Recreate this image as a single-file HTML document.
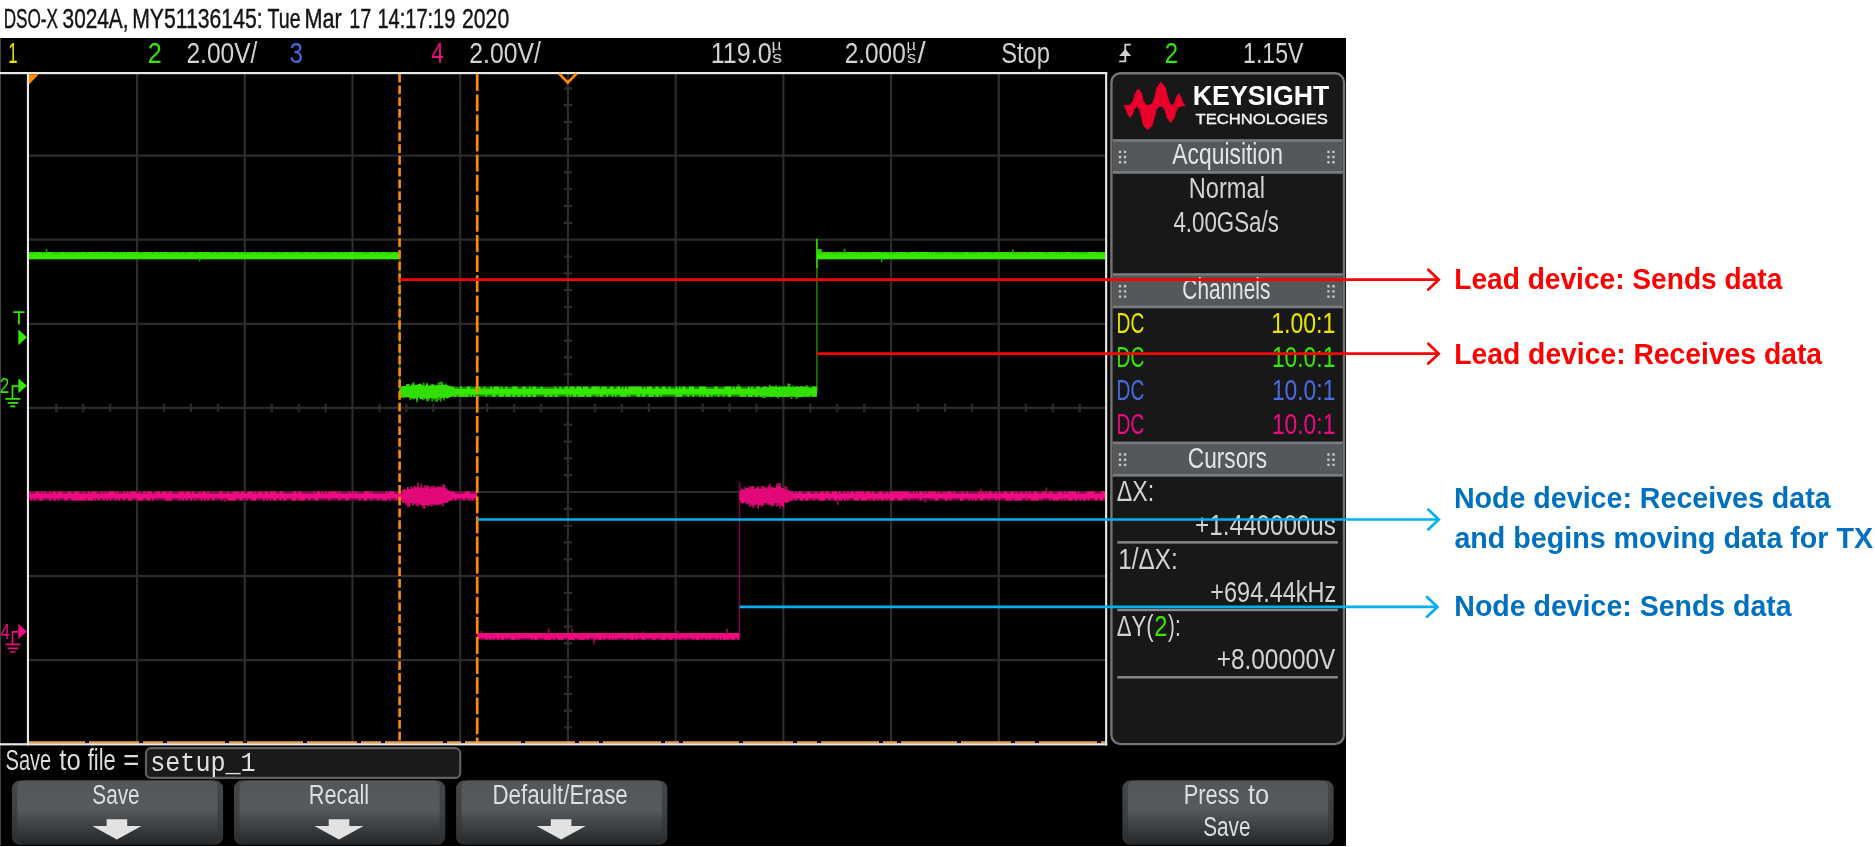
<!DOCTYPE html>
<html lang="en"><head><meta charset="utf-8"><title>Oscilloscope capture</title>
<style>html,body{margin:0;padding:0;background:#fff;overflow:hidden}svg{display:block;will-change:transform}text{white-space:pre}</style></head>
<body>
<svg width="1875" height="847" viewBox="0 0 1875 847">
<rect x="0" y="38" width="1346" height="808" fill="#000"/>
<rect x="0" y="38" width="1" height="808" fill="#444"/>
<text transform="translate(3.63 27.80) scale(0.6086 1)" font-family='"Liberation Sans", sans-serif' font-size="28.20" font-weight="400" fill="#141414" stroke="#141414" stroke-width="0.45">DSO-X</text>
<text transform="translate(62.57 27.80) scale(0.7384 1)" font-family='"Liberation Sans", sans-serif' font-size="28.20" font-weight="400" fill="#141414" stroke="#141414" stroke-width="0.45">3024A,</text>
<text transform="translate(132.20 27.80) scale(0.7520 1)" font-family='"Liberation Sans", sans-serif' font-size="28.20" font-weight="400" fill="#141414" stroke="#141414" stroke-width="0.45">MY51136145:</text>
<text transform="translate(267.61 27.80) scale(0.6940 1)" font-family='"Liberation Sans", sans-serif' font-size="28.20" font-weight="400" fill="#141414" stroke="#141414" stroke-width="0.45">Tue</text>
<text transform="translate(304.47 27.80) scale(0.7682 1)" font-family='"Liberation Sans", sans-serif' font-size="28.20" font-weight="400" fill="#141414" stroke="#141414" stroke-width="0.45">Mar</text>
<text transform="translate(349.32 27.80) scale(0.6985 1)" font-family='"Liberation Sans", sans-serif' font-size="28.20" font-weight="400" fill="#141414" stroke="#141414" stroke-width="0.45">17</text>
<text transform="translate(377.40 27.80) scale(0.7112 1)" font-family='"Liberation Sans", sans-serif' font-size="28.20" font-weight="400" fill="#141414" stroke="#141414" stroke-width="0.45">14:17:19</text>
<text transform="translate(462.04 27.80) scale(0.7524 1)" font-family='"Liberation Sans", sans-serif' font-size="28.20" font-weight="400" fill="#141414" stroke="#141414" stroke-width="0.45">2020</text>
<text transform="translate(8.14 62.70) scale(0.5773 1)" font-family='"Liberation Sans", sans-serif' font-size="29.07" font-weight="400" fill="#e6e600">1</text>
<text transform="translate(147.74 62.70) scale(0.8695 1)" font-family='"Liberation Sans", sans-serif' font-size="29.07" font-weight="400" fill="#36e800">2</text>
<text transform="translate(186.47 62.70) scale(0.8440 1)" font-family='"Liberation Sans", sans-serif' font-size="29.07" font-weight="400" fill="#d2d2d2">2.00V/</text>
<text transform="translate(289.76 62.70) scale(0.8111 1)" font-family='"Liberation Sans", sans-serif' font-size="29.07" font-weight="400" fill="#4a6be0">3</text>
<text transform="translate(431.15 62.70) scale(0.7766 1)" font-family='"Liberation Sans", sans-serif' font-size="29.07" font-weight="400" fill="#ee0a80">4</text>
<text transform="translate(469.36 62.70) scale(0.8500 1)" font-family='"Liberation Sans", sans-serif' font-size="29.07" font-weight="400" fill="#d2d2d2">2.00V/</text>
<text transform="translate(710.72 62.70) scale(0.8633 1)" font-family='"Liberation Sans", sans-serif' font-size="29.07" font-weight="400" fill="#d2d2d2">119.0</text>
<text transform="translate(771.57 50.40) scale(1.2518 1)" font-family='"Liberation Sans", sans-serif' font-size="14.00" font-weight="400" fill="#d2d2d2">µ</text>
<text transform="translate(772.21 62.70) scale(1.1494 1)" font-family='"Liberation Sans", sans-serif' font-size="17.00" font-weight="400" fill="#d2d2d2">s</text>
<text transform="translate(844.68 62.70) scale(0.8390 1)" font-family='"Liberation Sans", sans-serif' font-size="29.07" font-weight="400" fill="#d2d2d2">2.000</text>
<text transform="translate(906.45 50.40) scale(1.1782 1)" font-family='"Liberation Sans", sans-serif' font-size="14.00" font-weight="400" fill="#d2d2d2">µ</text>
<text transform="translate(907.05 62.70) scale(1.0818 1)" font-family='"Liberation Sans", sans-serif' font-size="17.00" font-weight="400" fill="#d2d2d2">s</text>
<text transform="translate(917.50 62.70) scale(1.0074 1)" font-family='"Liberation Sans", sans-serif' font-size="29.07" font-weight="400" fill="#d2d2d2">/</text>
<text transform="translate(1001.13 62.70) scale(0.8172 1)" font-family='"Liberation Sans", sans-serif' font-size="29.07" font-weight="400" fill="#d2d2d2">Stop</text>
<text transform="translate(1164.70 62.70) scale(0.8241 1)" font-family='"Liberation Sans", sans-serif' font-size="29.07" font-weight="400" fill="#36e800">2</text>
<text transform="translate(1243.07 62.70) scale(0.7941 1)" font-family='"Liberation Sans", sans-serif' font-size="29.07" font-weight="400" fill="#d2d2d2">1.15V</text>
<g fill="none" stroke="#d2d2d2" stroke-width="1.8"><path d="M1119.2 61.4H1125.3V44.6H1130.9"/></g>
<path d="M1125.3 48.9L1131.2 56H1119.2Z" fill="#d2d2d2"/>
<path d="M137.10 74V743M244.81 74V743M352.52 74V743M460.23 74V743M567.94 74V743M675.65 74V743M783.36 74V743M891.07 74V743M998.78 74V743M29 155.60H1105M29 239.70H1105M29 323.80H1105M29 407.90H1105M29 492.00H1105M29 576.10H1105M29 660.20H1105M56.33 403.70V412.10M83.26 403.70V412.10M110.19 403.70V412.10M137.12 403.70V412.10M164.05 403.70V412.10M190.98 403.70V412.10M217.91 403.70V412.10M244.84 403.70V412.10M271.77 403.70V412.10M298.70 403.70V412.10M325.63 403.70V412.10M352.56 403.70V412.10M379.49 403.70V412.10M406.42 403.70V412.10M433.35 403.70V412.10M460.28 403.70V412.10M487.21 403.70V412.10M514.14 403.70V412.10M541.07 403.70V412.10M568.00 403.70V412.10M594.93 403.70V412.10M621.86 403.70V412.10M648.79 403.70V412.10M675.72 403.70V412.10M702.65 403.70V412.10M729.58 403.70V412.10M756.51 403.70V412.10M783.44 403.70V412.10M810.37 403.70V412.10M837.30 403.70V412.10M864.23 403.70V412.10M891.16 403.70V412.10M918.09 403.70V412.10M945.02 403.70V412.10M971.95 403.70V412.10M998.88 403.70V412.10M1025.81 403.70V412.10M1052.74 403.70V412.10M1079.67 403.70V412.10M563.74 88.32H572.14M563.74 105.14H572.14M563.74 121.96H572.14M563.74 138.78H572.14M563.74 155.60H572.14M563.74 172.42H572.14M563.74 189.24H572.14M563.74 206.06H572.14M563.74 222.88H572.14M563.74 239.70H572.14M563.74 256.52H572.14M563.74 273.34H572.14M563.74 290.16H572.14M563.74 306.98H572.14M563.74 323.80H572.14M563.74 340.62H572.14M563.74 357.44H572.14M563.74 374.26H572.14M563.74 391.08H572.14M563.74 407.90H572.14M563.74 424.72H572.14M563.74 441.54H572.14M563.74 458.36H572.14M563.74 475.18H572.14M563.74 492.00H572.14M563.74 508.82H572.14M563.74 525.64H572.14M563.74 542.46H572.14M563.74 559.28H572.14M563.74 576.10H572.14M563.74 592.92H572.14M563.74 609.74H572.14M563.74 626.56H572.14M563.74 643.38H572.14M563.74 660.20H572.14M563.74 677.02H572.14M563.74 693.84H572.14M563.74 710.66H572.14M563.74 727.48H572.14" stroke="#2c2c2c" stroke-width="2.2" fill="none"/>
<path d="M399.8 256V392" stroke="#176400" stroke-width="1.6"/>
<path d="M816.9 266V392" stroke="#1d7c00" stroke-width="1.6"/>
<path d="M816.9 238.8V268" stroke="#2cc800" stroke-width="1.9"/>
<rect x="29.0" y="252.00" width="370.6" height="7.20" fill="#2bc400"/><rect x="29.0" y="253.70" width="370.6" height="5.50" fill="#36e800"/><path d="M34.0 252.00h1.68v1.80h-1.68zM37.4 252.00h1.68v1.80h-1.68zM39.1 252.00h1.68v1.80h-1.68zM45.8 252.00h1.68v1.80h-1.68zM47.5 252.00h1.68v1.80h-1.68zM49.2 252.00h1.68v1.80h-1.68zM50.9 252.00h1.68v1.80h-1.68zM61.0 252.00h1.68v1.80h-1.68zM62.6 252.00h1.68v1.80h-1.68zM69.4 252.00h1.68v1.80h-1.68zM74.4 252.00h1.68v1.80h-1.68zM77.8 252.00h1.68v1.80h-1.68zM81.2 252.00h1.68v1.80h-1.68zM82.8 252.00h1.68v1.80h-1.68zM87.9 252.00h1.68v1.80h-1.68zM89.6 252.00h1.68v1.80h-1.68zM91.3 252.00h1.68v1.80h-1.68zM92.9 252.00h1.68v1.80h-1.68zM96.3 252.00h1.68v1.80h-1.68zM98.0 252.00h1.68v1.80h-1.68zM101.3 252.00h1.68v1.80h-1.68zM103.0 252.00h1.68v1.80h-1.68zM106.4 252.00h1.68v1.80h-1.68zM108.1 252.00h1.68v1.80h-1.68zM109.8 252.00h1.68v1.80h-1.68zM111.4 252.00h1.68v1.80h-1.68zM116.5 252.00h1.68v1.80h-1.68zM119.9 252.00h1.68v1.80h-1.68zM123.2 252.00h1.68v1.80h-1.68zM126.6 252.00h1.68v1.80h-1.68zM128.3 252.00h1.68v1.80h-1.68zM130.0 252.00h1.68v1.80h-1.68zM131.6 252.00h1.68v1.80h-1.68zM135.0 252.00h1.68v1.80h-1.68zM136.7 252.00h1.68v1.80h-1.68zM143.4 252.00h1.68v1.80h-1.68zM145.1 252.00h1.68v1.80h-1.68zM146.8 252.00h1.68v1.80h-1.68zM150.1 252.00h1.68v1.80h-1.68zM155.2 252.00h1.68v1.80h-1.68zM156.9 252.00h1.68v1.80h-1.68zM160.2 252.00h1.68v1.80h-1.68zM163.6 252.00h1.68v1.80h-1.68zM165.3 252.00h1.68v1.80h-1.68zM172.0 252.00h1.68v1.80h-1.68zM175.4 252.00h1.68v1.80h-1.68zM182.1 252.00h1.68v1.80h-1.68zM188.8 252.00h1.68v1.80h-1.68zM190.5 252.00h1.68v1.80h-1.68zM192.2 252.00h1.68v1.80h-1.68zM198.9 252.00h1.68v1.80h-1.68zM200.6 252.00h1.68v1.80h-1.68zM204.0 252.00h1.68v1.80h-1.68zM205.7 252.00h1.68v1.80h-1.68zM207.3 252.00h1.68v1.80h-1.68zM214.1 252.00h1.68v1.80h-1.68zM219.1 252.00h1.68v1.80h-1.68zM222.5 252.00h1.68v1.80h-1.68zM225.9 252.00h1.68v1.80h-1.68zM229.2 252.00h1.68v1.80h-1.68zM234.3 252.00h1.68v1.80h-1.68zM235.9 252.00h1.68v1.80h-1.68zM241.0 252.00h1.68v1.80h-1.68zM251.1 252.00h1.68v1.80h-1.68zM254.5 252.00h1.68v1.80h-1.68zM259.5 252.00h1.68v1.80h-1.68zM264.6 252.00h1.68v1.80h-1.68zM267.9 252.00h1.68v1.80h-1.68zM278.0 252.00h1.68v1.80h-1.68zM283.1 252.00h1.68v1.80h-1.68zM286.4 252.00h1.68v1.80h-1.68zM294.8 252.00h1.68v1.80h-1.68zM296.5 252.00h1.68v1.80h-1.68zM304.9 252.00h1.68v1.80h-1.68zM306.6 252.00h1.68v1.80h-1.68zM311.7 252.00h1.68v1.80h-1.68zM315.0 252.00h1.68v1.80h-1.68zM325.1 252.00h1.68v1.80h-1.68zM333.5 252.00h1.68v1.80h-1.68zM335.2 252.00h1.68v1.80h-1.68zM340.3 252.00h1.68v1.80h-1.68zM345.3 252.00h1.68v1.80h-1.68zM348.7 252.00h1.68v1.80h-1.68zM350.4 252.00h1.68v1.80h-1.68zM352.0 252.00h1.68v1.80h-1.68zM353.7 252.00h1.68v1.80h-1.68zM357.1 252.00h1.68v1.80h-1.68zM360.5 252.00h1.68v1.80h-1.68zM370.5 252.00h1.68v1.80h-1.68zM372.2 252.00h1.68v1.80h-1.68zM375.6 252.00h1.68v1.80h-1.68zM377.3 252.00h1.68v1.80h-1.68zM382.3 252.00h1.68v1.80h-1.68zM384.0 252.00h1.68v1.80h-1.68zM392.4 252.00h1.68v1.80h-1.68zM394.1 252.00h1.68v1.80h-1.68zM399.2 252.00h0.45v1.80h-0.45z" fill="#36e800"/><path d="M45.8 248.91h1.5v4.1h-1.5zM198.9 258.20h1.5v3.4h-1.5z" fill="#23a800"/>
<rect x="399.6" y="386.60" width="417.3" height="10.10" fill="#1d8c00"/><rect x="399.6" y="388.90" width="417.3" height="5.50" fill="#36e800"/><path d="M401.3 386.60h1.68v2.40h-1.68zM401.3 394.30h1.68v2.40h-1.68zM403.0 386.60h1.68v2.40h-1.68zM404.6 386.60h1.68v2.40h-1.68zM406.3 394.30h1.68v2.40h-1.68zM408.0 394.30h1.68v2.40h-1.68zM409.7 394.30h1.68v2.40h-1.68zM411.4 386.60h1.68v2.40h-1.68zM418.1 394.30h1.68v2.40h-1.68zM421.5 386.60h1.68v2.40h-1.68zM424.8 386.60h1.68v2.40h-1.68zM426.5 386.60h1.68v2.40h-1.68zM426.5 394.30h1.68v2.40h-1.68zM428.2 386.60h1.68v2.40h-1.68zM429.9 386.60h1.68v2.40h-1.68zM431.6 386.60h1.68v2.40h-1.68zM433.3 386.60h1.68v2.40h-1.68zM433.3 394.30h1.68v2.40h-1.68zM436.6 394.30h1.68v2.40h-1.68zM438.3 394.30h1.68v2.40h-1.68zM440.0 386.60h1.68v2.40h-1.68zM440.0 394.30h1.68v2.40h-1.68zM441.7 386.60h1.68v2.40h-1.68zM441.7 394.30h1.68v2.40h-1.68zM446.7 394.30h1.68v2.40h-1.68zM448.4 394.30h1.68v2.40h-1.68zM450.1 386.60h1.68v2.40h-1.68zM450.1 394.30h1.68v2.40h-1.68zM451.8 386.60h1.68v2.40h-1.68zM453.4 394.30h1.68v2.40h-1.68zM455.1 394.30h1.68v2.40h-1.68zM458.5 394.30h1.68v2.40h-1.68zM460.2 386.60h1.68v2.40h-1.68zM460.2 394.30h1.68v2.40h-1.68zM461.9 394.30h1.68v2.40h-1.68zM463.5 394.30h1.68v2.40h-1.68zM465.2 394.30h1.68v2.40h-1.68zM466.9 386.60h1.68v2.40h-1.68zM466.9 394.30h1.68v2.40h-1.68zM468.6 386.60h1.68v2.40h-1.68zM470.3 394.30h1.68v2.40h-1.68zM473.6 394.30h1.68v2.40h-1.68zM475.3 386.60h1.68v2.40h-1.68zM477.0 386.60h1.68v2.40h-1.68zM478.7 386.60h1.68v2.40h-1.68zM483.7 386.60h1.68v2.40h-1.68zM485.4 394.30h1.68v2.40h-1.68zM490.5 386.60h1.68v2.40h-1.68zM492.1 394.30h1.68v2.40h-1.68zM493.8 386.60h1.68v2.40h-1.68zM493.8 394.30h1.68v2.40h-1.68zM495.5 386.60h1.68v2.40h-1.68zM497.2 386.60h1.68v2.40h-1.68zM498.9 394.30h1.68v2.40h-1.68zM500.6 386.60h1.68v2.40h-1.68zM500.6 394.30h1.68v2.40h-1.68zM502.2 394.30h1.68v2.40h-1.68zM505.6 386.60h1.68v2.40h-1.68zM505.6 394.30h1.68v2.40h-1.68zM507.3 394.30h1.68v2.40h-1.68zM509.0 394.30h1.68v2.40h-1.68zM512.3 386.60h1.68v2.40h-1.68zM512.3 394.30h1.68v2.40h-1.68zM514.0 386.60h1.68v2.40h-1.68zM514.0 394.30h1.68v2.40h-1.68zM515.7 386.60h1.68v2.40h-1.68zM517.4 394.30h1.68v2.40h-1.68zM519.1 394.30h1.68v2.40h-1.68zM522.4 386.60h1.68v2.40h-1.68zM522.4 394.30h1.68v2.40h-1.68zM524.1 386.60h1.68v2.40h-1.68zM524.1 394.30h1.68v2.40h-1.68zM527.5 394.30h1.68v2.40h-1.68zM529.2 386.60h1.68v2.40h-1.68zM529.2 394.30h1.68v2.40h-1.68zM532.5 386.60h1.68v2.40h-1.68zM532.5 394.30h1.68v2.40h-1.68zM534.2 386.60h1.68v2.40h-1.68zM534.2 394.30h1.68v2.40h-1.68zM540.9 386.60h1.68v2.40h-1.68zM544.3 394.30h1.68v2.40h-1.68zM546.0 394.30h1.68v2.40h-1.68zM549.3 394.30h1.68v2.40h-1.68zM551.0 394.30h1.68v2.40h-1.68zM554.4 386.60h1.68v2.40h-1.68zM554.4 394.30h1.68v2.40h-1.68zM556.1 394.30h1.68v2.40h-1.68zM559.4 386.60h1.68v2.40h-1.68zM564.5 386.60h1.68v2.40h-1.68zM566.2 386.60h1.68v2.40h-1.68zM566.2 394.30h1.68v2.40h-1.68zM569.5 386.60h1.68v2.40h-1.68zM569.5 394.30h1.68v2.40h-1.68zM571.2 386.60h1.68v2.40h-1.68zM572.9 386.60h1.68v2.40h-1.68zM572.9 394.30h1.68v2.40h-1.68zM574.6 394.30h1.68v2.40h-1.68zM576.3 386.60h1.68v2.40h-1.68zM577.9 386.60h1.68v2.40h-1.68zM577.9 394.30h1.68v2.40h-1.68zM579.6 386.60h1.68v2.40h-1.68zM579.6 394.30h1.68v2.40h-1.68zM581.3 394.30h1.68v2.40h-1.68zM583.0 386.60h1.68v2.40h-1.68zM583.0 394.30h1.68v2.40h-1.68zM584.7 386.60h1.68v2.40h-1.68zM586.4 386.60h1.68v2.40h-1.68zM586.4 394.30h1.68v2.40h-1.68zM588.0 394.30h1.68v2.40h-1.68zM589.7 394.30h1.68v2.40h-1.68zM591.4 386.60h1.68v2.40h-1.68zM593.1 386.60h1.68v2.40h-1.68zM594.8 386.60h1.68v2.40h-1.68zM596.5 386.60h1.68v2.40h-1.68zM596.5 394.30h1.68v2.40h-1.68zM598.1 386.60h1.68v2.40h-1.68zM599.8 394.30h1.68v2.40h-1.68zM601.5 386.60h1.68v2.40h-1.68zM601.5 394.30h1.68v2.40h-1.68zM603.2 386.60h1.68v2.40h-1.68zM604.9 386.60h1.68v2.40h-1.68zM606.5 394.30h1.68v2.40h-1.68zM609.9 386.60h1.68v2.40h-1.68zM611.6 386.60h1.68v2.40h-1.68zM611.6 394.30h1.68v2.40h-1.68zM615.0 394.30h1.68v2.40h-1.68zM616.6 386.60h1.68v2.40h-1.68zM618.3 386.60h1.68v2.40h-1.68zM620.0 394.30h1.68v2.40h-1.68zM621.7 386.60h1.68v2.40h-1.68zM621.7 394.30h1.68v2.40h-1.68zM623.4 394.30h1.68v2.40h-1.68zM625.1 386.60h1.68v2.40h-1.68zM625.1 394.30h1.68v2.40h-1.68zM628.4 386.60h1.68v2.40h-1.68zM628.4 394.30h1.68v2.40h-1.68zM630.1 386.60h1.68v2.40h-1.68zM631.8 386.60h1.68v2.40h-1.68zM633.5 386.60h1.68v2.40h-1.68zM635.2 386.60h1.68v2.40h-1.68zM636.8 386.60h1.68v2.40h-1.68zM636.8 394.30h1.68v2.40h-1.68zM638.5 386.60h1.68v2.40h-1.68zM638.5 394.30h1.68v2.40h-1.68zM640.2 386.60h1.68v2.40h-1.68zM641.9 394.30h1.68v2.40h-1.68zM643.6 386.60h1.68v2.40h-1.68zM643.6 394.30h1.68v2.40h-1.68zM646.9 386.60h1.68v2.40h-1.68zM648.6 386.60h1.68v2.40h-1.68zM648.6 394.30h1.68v2.40h-1.68zM650.3 386.60h1.68v2.40h-1.68zM650.3 394.30h1.68v2.40h-1.68zM652.0 394.30h1.68v2.40h-1.68zM655.3 386.60h1.68v2.40h-1.68zM655.3 394.30h1.68v2.40h-1.68zM657.0 386.60h1.68v2.40h-1.68zM657.0 394.30h1.68v2.40h-1.68zM660.4 394.30h1.68v2.40h-1.68zM662.1 386.60h1.68v2.40h-1.68zM663.8 386.60h1.68v2.40h-1.68zM668.8 386.60h1.68v2.40h-1.68zM675.5 386.60h1.68v2.40h-1.68zM675.5 394.30h1.68v2.40h-1.68zM677.2 394.30h1.68v2.40h-1.68zM678.9 386.60h1.68v2.40h-1.68zM678.9 394.30h1.68v2.40h-1.68zM680.6 394.30h1.68v2.40h-1.68zM682.3 386.60h1.68v2.40h-1.68zM683.9 386.60h1.68v2.40h-1.68zM687.3 394.30h1.68v2.40h-1.68zM689.0 386.60h1.68v2.40h-1.68zM690.7 386.60h1.68v2.40h-1.68zM692.4 386.60h1.68v2.40h-1.68zM692.4 394.30h1.68v2.40h-1.68zM699.1 386.60h1.68v2.40h-1.68zM699.1 394.30h1.68v2.40h-1.68zM700.8 386.60h1.68v2.40h-1.68zM702.5 386.60h1.68v2.40h-1.68zM702.5 394.30h1.68v2.40h-1.68zM704.1 386.60h1.68v2.40h-1.68zM705.8 394.30h1.68v2.40h-1.68zM707.5 394.30h1.68v2.40h-1.68zM710.9 394.30h1.68v2.40h-1.68zM714.2 386.60h1.68v2.40h-1.68zM715.9 386.60h1.68v2.40h-1.68zM717.6 394.30h1.68v2.40h-1.68zM722.6 394.30h1.68v2.40h-1.68zM724.3 386.60h1.68v2.40h-1.68zM726.0 386.60h1.68v2.40h-1.68zM727.7 386.60h1.68v2.40h-1.68zM727.7 394.30h1.68v2.40h-1.68zM729.4 386.60h1.68v2.40h-1.68zM729.4 394.30h1.68v2.40h-1.68zM732.7 386.60h1.68v2.40h-1.68zM736.1 386.60h1.68v2.40h-1.68zM737.8 386.60h1.68v2.40h-1.68zM739.5 386.60h1.68v2.40h-1.68zM739.5 394.30h1.68v2.40h-1.68zM741.1 394.30h1.68v2.40h-1.68zM742.8 394.30h1.68v2.40h-1.68zM744.5 394.30h1.68v2.40h-1.68zM747.9 386.60h1.68v2.40h-1.68zM747.9 394.30h1.68v2.40h-1.68zM749.6 394.30h1.68v2.40h-1.68zM751.2 386.60h1.68v2.40h-1.68zM751.2 394.30h1.68v2.40h-1.68zM754.6 394.30h1.68v2.40h-1.68zM756.3 386.60h1.68v2.40h-1.68zM756.3 394.30h1.68v2.40h-1.68zM758.0 386.60h1.68v2.40h-1.68zM759.7 394.30h1.68v2.40h-1.68zM761.3 394.30h1.68v2.40h-1.68zM763.0 386.60h1.68v2.40h-1.68zM763.0 394.30h1.68v2.40h-1.68zM764.7 386.60h1.68v2.40h-1.68zM764.7 394.30h1.68v2.40h-1.68zM769.8 386.60h1.68v2.40h-1.68zM769.8 394.30h1.68v2.40h-1.68zM771.4 394.30h1.68v2.40h-1.68zM773.1 386.60h1.68v2.40h-1.68zM774.8 386.60h1.68v2.40h-1.68zM776.5 394.30h1.68v2.40h-1.68zM778.2 394.30h1.68v2.40h-1.68zM779.8 394.30h1.68v2.40h-1.68zM781.5 386.60h1.68v2.40h-1.68zM781.5 394.30h1.68v2.40h-1.68zM783.2 394.30h1.68v2.40h-1.68zM784.9 394.30h1.68v2.40h-1.68zM786.6 386.60h1.68v2.40h-1.68zM786.6 394.30h1.68v2.40h-1.68zM788.3 394.30h1.68v2.40h-1.68zM793.3 394.30h1.68v2.40h-1.68zM795.0 386.60h1.68v2.40h-1.68zM796.7 386.60h1.68v2.40h-1.68zM798.4 394.30h1.68v2.40h-1.68zM800.0 386.60h1.68v2.40h-1.68zM801.7 386.60h1.68v2.40h-1.68zM805.1 386.60h1.68v2.40h-1.68zM805.1 394.30h1.68v2.40h-1.68zM806.8 386.60h1.68v2.40h-1.68zM806.8 394.30h1.68v2.40h-1.68zM808.4 394.30h1.68v2.40h-1.68zM811.8 386.60h1.68v2.40h-1.68zM811.8 394.30h1.68v2.40h-1.68zM813.5 386.60h1.68v2.40h-1.68zM813.5 394.30h1.68v2.40h-1.68zM815.2 386.60h1.68v2.40h-1.68zM815.2 394.30h1.68v2.40h-1.68z" fill="#36e800"/><path d="M737.8 384.37h1.5v3.2h-1.5z" fill="#23a800"/>
<path d="M401.0 386.4h1.75v11.3h-1.75zM402.7 386.1h1.75v11.7h-1.75zM404.4 386.1h1.75v11.5h-1.75zM406.0 384.2h1.75v13.0h-1.75zM407.7 383.9h1.75v13.7h-1.75zM409.4 385.7h1.75v12.3h-1.75zM411.1 385.0h1.75v13.6h-1.75zM412.8 383.9h1.75v15.4h-1.75zM414.5 385.1h1.75v13.5h-1.75zM416.1 384.9h1.75v15.0h-1.75zM417.8 384.1h1.75v13.5h-1.75zM419.5 383.6h1.75v15.3h-1.75zM421.2 384.7h1.75v14.8h-1.75zM422.9 385.2h1.75v13.2h-1.75zM424.6 385.2h1.75v13.5h-1.75zM426.2 383.3h1.75v15.8h-1.75zM427.9 385.5h1.75v13.7h-1.75zM429.6 385.2h1.75v12.9h-1.75zM431.3 384.0h1.75v14.2h-1.75zM433.0 384.8h1.75v14.5h-1.75zM434.7 385.6h1.75v12.7h-1.75zM436.3 384.9h1.75v14.5h-1.75zM438.0 385.1h1.75v12.5h-1.75zM439.7 384.7h1.75v14.2h-1.75zM441.4 384.1h1.75v13.8h-1.75zM443.1 384.7h1.75v13.7h-1.75zM444.7 385.1h1.75v12.7h-1.75zM446.4 385.3h1.75v13.1h-1.75zM448.1 385.7h1.75v12.1h-1.75zM449.8 386.3h1.75v10.8h-1.75zM451.5 387.0h1.75v9.0h-1.75zM453.2 387.6h1.75v8.0h-1.75z" fill="#31df00"/><path d="M409.4 398.0h1.7v2.3h-1.7zM411.1 383.4h1.7v1.6h-1.7zM412.8 381.9h1.7v2.0h-1.7zM416.1 399.9h1.7v2.3h-1.7zM422.9 382.6h1.7v2.6h-1.7zM422.9 398.4h1.7v1.9h-1.7zM426.2 399.1h1.7v2.3h-1.7zM427.9 399.2h1.7v1.5h-1.7zM431.3 398.2h1.7v3.4h-1.7zM434.7 398.3h1.7v3.3h-1.7zM436.3 399.4h1.7v2.3h-1.7zM438.0 382.4h1.7v2.7h-1.7zM438.0 397.6h1.7v2.1h-1.7zM439.7 381.7h1.7v2.9h-1.7zM439.7 398.8h1.7v3.0h-1.7zM441.4 382.0h1.7v2.1h-1.7zM443.1 398.4h1.7v2.1h-1.7zM444.7 383.6h1.7v1.5h-1.7z" fill="#23a800"/>
<path d="M757.0 388.4h1.75v6.8h-1.75zM758.7 388.2h1.75v7.2h-1.75zM760.4 388.0h1.75v7.5h-1.75zM762.0 387.7h1.75v8.2h-1.75zM763.7 387.7h1.75v8.1h-1.75zM765.4 387.3h1.75v8.9h-1.75zM767.1 387.6h1.75v8.7h-1.75zM768.8 387.2h1.75v9.6h-1.75zM770.5 386.3h1.75v10.4h-1.75zM772.1 386.5h1.75v10.5h-1.75zM773.8 386.9h1.75v9.6h-1.75zM775.5 386.9h1.75v10.3h-1.75zM777.2 387.0h1.75v9.6h-1.75zM778.9 387.1h1.75v9.9h-1.75zM780.6 386.9h1.75v9.5h-1.75zM782.2 386.7h1.75v10.2h-1.75zM783.9 386.2h1.75v10.4h-1.75zM785.6 387.0h1.75v10.0h-1.75zM787.3 386.2h1.75v10.9h-1.75zM789.0 386.7h1.75v9.9h-1.75zM790.7 387.1h1.75v9.4h-1.75zM792.3 387.3h1.75v9.0h-1.75zM794.0 387.3h1.75v9.5h-1.75zM795.7 387.2h1.75v10.0h-1.75zM797.4 386.8h1.75v10.4h-1.75zM799.1 387.1h1.75v10.0h-1.75zM800.7 386.5h1.75v10.7h-1.75zM802.4 386.9h1.75v10.1h-1.75zM804.1 386.5h1.75v9.8h-1.75zM805.8 387.6h1.75v8.4h-1.75zM807.5 387.7h1.75v7.9h-1.75zM809.2 388.0h1.75v7.4h-1.75z" fill="#31df00"/><path d="M762.0 395.8h1.7v2.3h-1.7zM763.7 395.8h1.7v2.5h-1.7zM768.8 384.8h1.7v2.4h-1.7zM775.5 385.2h1.7v1.8h-1.7zM777.2 396.6h1.7v1.9h-1.7zM778.9 385.6h1.7v1.5h-1.7zM787.3 383.5h1.7v2.7h-1.7zM789.0 383.7h1.7v3.0h-1.7zM790.7 396.5h1.7v2.5h-1.7zM792.3 385.6h1.7v1.7h-1.7zM795.7 397.2h1.7v2.0h-1.7zM805.8 384.9h1.7v2.7h-1.7z" fill="#23a800"/>
<rect x="816.9" y="252.00" width="288.1" height="7.20" fill="#2bc400"/><rect x="816.9" y="253.70" width="288.1" height="5.50" fill="#36e800"/><path d="M816.9 252.00h1.68v1.80h-1.68zM818.6 252.00h1.68v1.80h-1.68zM820.3 252.00h1.68v1.80h-1.68zM823.6 252.00h1.68v1.80h-1.68zM827.0 252.00h1.68v1.80h-1.68zM830.4 252.00h1.68v1.80h-1.68zM838.8 252.00h1.68v1.80h-1.68zM843.8 252.00h1.68v1.80h-1.68zM847.2 252.00h1.68v1.80h-1.68zM848.9 252.00h1.68v1.80h-1.68zM850.6 252.00h1.68v1.80h-1.68zM853.9 252.00h1.68v1.80h-1.68zM857.3 252.00h1.68v1.80h-1.68zM862.3 252.00h1.68v1.80h-1.68zM865.7 252.00h1.68v1.80h-1.68zM869.1 252.00h1.68v1.80h-1.68zM872.4 252.00h1.68v1.80h-1.68zM874.1 252.00h1.68v1.80h-1.68zM875.8 252.00h1.68v1.80h-1.68zM877.5 252.00h1.68v1.80h-1.68zM879.2 252.00h1.68v1.80h-1.68zM884.2 252.00h1.68v1.80h-1.68zM896.0 252.00h1.68v1.80h-1.68zM899.3 252.00h1.68v1.80h-1.68zM901.0 252.00h1.68v1.80h-1.68zM904.4 252.00h1.68v1.80h-1.68zM911.1 252.00h1.68v1.80h-1.68zM912.8 252.00h1.68v1.80h-1.68zM914.5 252.00h1.68v1.80h-1.68zM916.2 252.00h1.68v1.80h-1.68zM919.5 252.00h1.68v1.80h-1.68zM921.2 252.00h1.68v1.80h-1.68zM922.9 252.00h1.68v1.80h-1.68zM924.6 252.00h1.68v1.80h-1.68zM926.3 252.00h1.68v1.80h-1.68zM929.6 252.00h1.68v1.80h-1.68zM933.0 252.00h1.68v1.80h-1.68zM944.8 252.00h1.68v1.80h-1.68zM949.8 252.00h1.68v1.80h-1.68zM965.0 252.00h1.68v1.80h-1.68zM966.6 252.00h1.68v1.80h-1.68zM978.4 252.00h1.68v1.80h-1.68zM983.5 252.00h1.68v1.80h-1.68zM985.2 252.00h1.68v1.80h-1.68zM988.5 252.00h1.68v1.80h-1.68zM995.2 252.00h1.68v1.80h-1.68zM996.9 252.00h1.68v1.80h-1.68zM1000.3 252.00h1.68v1.80h-1.68zM1002.0 252.00h1.68v1.80h-1.68zM1005.3 252.00h1.68v1.80h-1.68zM1007.0 252.00h1.68v1.80h-1.68zM1010.4 252.00h1.68v1.80h-1.68zM1012.1 252.00h1.68v1.80h-1.68zM1017.1 252.00h1.68v1.80h-1.68zM1020.5 252.00h1.68v1.80h-1.68zM1023.8 252.00h1.68v1.80h-1.68zM1028.9 252.00h1.68v1.80h-1.68zM1030.6 252.00h1.68v1.80h-1.68zM1032.3 252.00h1.68v1.80h-1.68zM1033.9 252.00h1.68v1.80h-1.68zM1037.3 252.00h1.68v1.80h-1.68zM1039.0 252.00h1.68v1.80h-1.68zM1040.7 252.00h1.68v1.80h-1.68zM1042.4 252.00h1.68v1.80h-1.68zM1049.1 252.00h1.68v1.80h-1.68zM1050.8 252.00h1.68v1.80h-1.68zM1052.4 252.00h1.68v1.80h-1.68zM1054.1 252.00h1.68v1.80h-1.68zM1057.5 252.00h1.68v1.80h-1.68zM1060.9 252.00h1.68v1.80h-1.68zM1065.9 252.00h1.68v1.80h-1.68zM1067.6 252.00h1.68v1.80h-1.68zM1069.3 252.00h1.68v1.80h-1.68zM1074.3 252.00h1.68v1.80h-1.68zM1087.8 252.00h1.68v1.80h-1.68zM1089.5 252.00h1.68v1.80h-1.68zM1091.1 252.00h1.68v1.80h-1.68zM1092.8 252.00h1.68v1.80h-1.68zM1094.5 252.00h1.68v1.80h-1.68zM1097.9 252.00h1.68v1.80h-1.68zM1101.2 252.00h1.68v1.80h-1.68zM1104.6 252.00h0.39v1.80h-0.39z" fill="#36e800"/><path d="M843.8 248.80h1.5v4.2h-1.5zM880.8 258.20h1.5v4.1h-1.5zM1012.1 249.48h1.5v3.5h-1.5z" fill="#23a800"/>
<rect x="817" y="249.2" width="4.8" height="5" fill="#2fd400"/>
<path d="M477.4 496V636" stroke="#6a003c" stroke-width="1.4"/>
<path d="M739.5 481.7V636" stroke="#85004a" stroke-width="1.5"/>
<rect x="29.0" y="491.50" width="448.2" height="8.90" fill="#8c0650"/><rect x="29.0" y="493.80" width="448.2" height="4.30" fill="#ee0a80"/><path d="M29.0 491.50h1.68v2.40h-1.68zM30.7 498.00h1.68v2.40h-1.68zM34.0 498.00h1.68v2.40h-1.68zM35.7 491.50h1.68v2.40h-1.68zM37.4 491.50h1.68v2.40h-1.68zM39.1 498.00h1.68v2.40h-1.68zM40.8 491.50h1.68v2.40h-1.68zM40.8 498.00h1.68v2.40h-1.68zM44.1 491.50h1.68v2.40h-1.68zM49.2 491.50h1.68v2.40h-1.68zM49.2 498.00h1.68v2.40h-1.68zM52.6 491.50h1.68v2.40h-1.68zM54.2 491.50h1.68v2.40h-1.68zM54.2 498.00h1.68v2.40h-1.68zM57.6 491.50h1.68v2.40h-1.68zM57.6 498.00h1.68v2.40h-1.68zM59.3 491.50h1.68v2.40h-1.68zM61.0 491.50h1.68v2.40h-1.68zM64.3 498.00h1.68v2.40h-1.68zM66.0 498.00h1.68v2.40h-1.68zM67.7 491.50h1.68v2.40h-1.68zM69.4 491.50h1.68v2.40h-1.68zM71.1 498.00h1.68v2.40h-1.68zM72.7 498.00h1.68v2.40h-1.68zM74.4 491.50h1.68v2.40h-1.68zM74.4 498.00h1.68v2.40h-1.68zM76.1 491.50h1.68v2.40h-1.68zM76.1 498.00h1.68v2.40h-1.68zM77.8 491.50h1.68v2.40h-1.68zM77.8 498.00h1.68v2.40h-1.68zM79.5 498.00h1.68v2.40h-1.68zM81.2 498.00h1.68v2.40h-1.68zM82.8 491.50h1.68v2.40h-1.68zM82.8 498.00h1.68v2.40h-1.68zM84.5 498.00h1.68v2.40h-1.68zM87.9 491.50h1.68v2.40h-1.68zM87.9 498.00h1.68v2.40h-1.68zM89.6 498.00h1.68v2.40h-1.68zM91.3 491.50h1.68v2.40h-1.68zM91.3 498.00h1.68v2.40h-1.68zM92.9 491.50h1.68v2.40h-1.68zM94.6 491.50h1.68v2.40h-1.68zM94.6 498.00h1.68v2.40h-1.68zM98.0 498.00h1.68v2.40h-1.68zM101.3 491.50h1.68v2.40h-1.68zM103.0 498.00h1.68v2.40h-1.68zM104.7 491.50h1.68v2.40h-1.68zM106.4 498.00h1.68v2.40h-1.68zM108.1 491.50h1.68v2.40h-1.68zM109.8 491.50h1.68v2.40h-1.68zM109.8 498.00h1.68v2.40h-1.68zM111.4 491.50h1.68v2.40h-1.68zM113.1 491.50h1.68v2.40h-1.68zM114.8 498.00h1.68v2.40h-1.68zM116.5 491.50h1.68v2.40h-1.68zM118.2 498.00h1.68v2.40h-1.68zM123.2 491.50h1.68v2.40h-1.68zM123.2 498.00h1.68v2.40h-1.68zM126.6 491.50h1.68v2.40h-1.68zM128.3 498.00h1.68v2.40h-1.68zM130.0 491.50h1.68v2.40h-1.68zM130.0 498.00h1.68v2.40h-1.68zM131.6 491.50h1.68v2.40h-1.68zM133.3 491.50h1.68v2.40h-1.68zM135.0 491.50h1.68v2.40h-1.68zM136.7 498.00h1.68v2.40h-1.68zM138.4 491.50h1.68v2.40h-1.68zM138.4 498.00h1.68v2.40h-1.68zM140.0 498.00h1.68v2.40h-1.68zM141.7 498.00h1.68v2.40h-1.68zM143.4 491.50h1.68v2.40h-1.68zM146.8 491.50h1.68v2.40h-1.68zM146.8 498.00h1.68v2.40h-1.68zM148.5 491.50h1.68v2.40h-1.68zM148.5 498.00h1.68v2.40h-1.68zM150.1 491.50h1.68v2.40h-1.68zM151.8 498.00h1.68v2.40h-1.68zM155.2 491.50h1.68v2.40h-1.68zM156.9 491.50h1.68v2.40h-1.68zM158.6 491.50h1.68v2.40h-1.68zM161.9 491.50h1.68v2.40h-1.68zM163.6 491.50h1.68v2.40h-1.68zM165.3 491.50h1.68v2.40h-1.68zM165.3 498.00h1.68v2.40h-1.68zM167.0 498.00h1.68v2.40h-1.68zM168.6 491.50h1.68v2.40h-1.68zM168.6 498.00h1.68v2.40h-1.68zM170.3 491.50h1.68v2.40h-1.68zM170.3 498.00h1.68v2.40h-1.68zM178.7 491.50h1.68v2.40h-1.68zM178.7 498.00h1.68v2.40h-1.68zM180.4 491.50h1.68v2.40h-1.68zM182.1 491.50h1.68v2.40h-1.68zM182.1 498.00h1.68v2.40h-1.68zM185.5 491.50h1.68v2.40h-1.68zM185.5 498.00h1.68v2.40h-1.68zM187.2 491.50h1.68v2.40h-1.68zM188.8 491.50h1.68v2.40h-1.68zM190.5 498.00h1.68v2.40h-1.68zM192.2 491.50h1.68v2.40h-1.68zM193.9 498.00h1.68v2.40h-1.68zM198.9 491.50h1.68v2.40h-1.68zM200.6 498.00h1.68v2.40h-1.68zM202.3 491.50h1.68v2.40h-1.68zM204.0 491.50h1.68v2.40h-1.68zM204.0 498.00h1.68v2.40h-1.68zM207.3 491.50h1.68v2.40h-1.68zM207.3 498.00h1.68v2.40h-1.68zM212.4 498.00h1.68v2.40h-1.68zM219.1 491.50h1.68v2.40h-1.68zM220.8 491.50h1.68v2.40h-1.68zM220.8 498.00h1.68v2.40h-1.68zM227.5 491.50h1.68v2.40h-1.68zM227.5 498.00h1.68v2.40h-1.68zM229.2 498.00h1.68v2.40h-1.68zM230.9 498.00h1.68v2.40h-1.68zM232.6 491.50h1.68v2.40h-1.68zM232.6 498.00h1.68v2.40h-1.68zM234.3 491.50h1.68v2.40h-1.68zM234.3 498.00h1.68v2.40h-1.68zM235.9 491.50h1.68v2.40h-1.68zM237.6 491.50h1.68v2.40h-1.68zM239.3 498.00h1.68v2.40h-1.68zM241.0 491.50h1.68v2.40h-1.68zM241.0 498.00h1.68v2.40h-1.68zM242.7 491.50h1.68v2.40h-1.68zM246.0 498.00h1.68v2.40h-1.68zM247.7 491.50h1.68v2.40h-1.68zM249.4 491.50h1.68v2.40h-1.68zM251.1 491.50h1.68v2.40h-1.68zM251.1 498.00h1.68v2.40h-1.68zM252.8 498.00h1.68v2.40h-1.68zM254.5 491.50h1.68v2.40h-1.68zM254.5 498.00h1.68v2.40h-1.68zM257.8 491.50h1.68v2.40h-1.68zM259.5 491.50h1.68v2.40h-1.68zM261.2 491.50h1.68v2.40h-1.68zM262.9 498.00h1.68v2.40h-1.68zM264.6 491.50h1.68v2.40h-1.68zM266.2 491.50h1.68v2.40h-1.68zM266.2 498.00h1.68v2.40h-1.68zM269.6 491.50h1.68v2.40h-1.68zM269.6 498.00h1.68v2.40h-1.68zM271.3 491.50h1.68v2.40h-1.68zM273.0 491.50h1.68v2.40h-1.68zM273.0 498.00h1.68v2.40h-1.68zM274.6 491.50h1.68v2.40h-1.68zM274.6 498.00h1.68v2.40h-1.68zM279.7 491.50h1.68v2.40h-1.68zM279.7 498.00h1.68v2.40h-1.68zM281.4 491.50h1.68v2.40h-1.68zM283.1 498.00h1.68v2.40h-1.68zM284.7 498.00h1.68v2.40h-1.68zM291.5 498.00h1.68v2.40h-1.68zM293.2 491.50h1.68v2.40h-1.68zM293.2 498.00h1.68v2.40h-1.68zM294.8 491.50h1.68v2.40h-1.68zM294.8 498.00h1.68v2.40h-1.68zM298.2 491.50h1.68v2.40h-1.68zM298.2 498.00h1.68v2.40h-1.68zM299.9 491.50h1.68v2.40h-1.68zM299.9 498.00h1.68v2.40h-1.68zM301.6 498.00h1.68v2.40h-1.68zM303.2 498.00h1.68v2.40h-1.68zM308.3 498.00h1.68v2.40h-1.68zM313.3 491.50h1.68v2.40h-1.68zM315.0 498.00h1.68v2.40h-1.68zM316.7 491.50h1.68v2.40h-1.68zM316.7 498.00h1.68v2.40h-1.68zM318.4 491.50h1.68v2.40h-1.68zM321.8 491.50h1.68v2.40h-1.68zM325.1 491.50h1.68v2.40h-1.68zM328.5 491.50h1.68v2.40h-1.68zM328.5 498.00h1.68v2.40h-1.68zM330.2 491.50h1.68v2.40h-1.68zM331.9 491.50h1.68v2.40h-1.68zM333.5 491.50h1.68v2.40h-1.68zM335.2 491.50h1.68v2.40h-1.68zM338.6 491.50h1.68v2.40h-1.68zM338.6 498.00h1.68v2.40h-1.68zM345.3 498.00h1.68v2.40h-1.68zM347.0 498.00h1.68v2.40h-1.68zM348.7 491.50h1.68v2.40h-1.68zM352.0 491.50h1.68v2.40h-1.68zM355.4 491.50h1.68v2.40h-1.68zM358.8 498.00h1.68v2.40h-1.68zM363.8 491.50h1.68v2.40h-1.68zM363.8 498.00h1.68v2.40h-1.68zM365.5 491.50h1.68v2.40h-1.68zM365.5 498.00h1.68v2.40h-1.68zM367.2 491.50h1.68v2.40h-1.68zM370.5 491.50h1.68v2.40h-1.68zM370.5 498.00h1.68v2.40h-1.68zM377.3 498.00h1.68v2.40h-1.68zM382.3 498.00h1.68v2.40h-1.68zM384.0 498.00h1.68v2.40h-1.68zM385.7 491.50h1.68v2.40h-1.68zM385.7 498.00h1.68v2.40h-1.68zM389.1 491.50h1.68v2.40h-1.68zM389.1 498.00h1.68v2.40h-1.68zM390.7 491.50h1.68v2.40h-1.68zM392.4 491.50h1.68v2.40h-1.68zM395.8 498.00h1.68v2.40h-1.68zM399.2 498.00h1.68v2.40h-1.68zM400.8 498.00h1.68v2.40h-1.68zM402.5 498.00h1.68v2.40h-1.68zM405.9 491.50h1.68v2.40h-1.68zM405.9 498.00h1.68v2.40h-1.68zM409.2 491.50h1.68v2.40h-1.68zM409.2 498.00h1.68v2.40h-1.68zM410.9 491.50h1.68v2.40h-1.68zM410.9 498.00h1.68v2.40h-1.68zM416.0 491.50h1.68v2.40h-1.68zM417.7 491.50h1.68v2.40h-1.68zM419.3 491.50h1.68v2.40h-1.68zM419.3 498.00h1.68v2.40h-1.68zM421.0 491.50h1.68v2.40h-1.68zM422.7 491.50h1.68v2.40h-1.68zM424.4 498.00h1.68v2.40h-1.68zM426.1 491.50h1.68v2.40h-1.68zM427.8 491.50h1.68v2.40h-1.68zM427.8 498.00h1.68v2.40h-1.68zM429.4 491.50h1.68v2.40h-1.68zM431.1 491.50h1.68v2.40h-1.68zM431.1 498.00h1.68v2.40h-1.68zM432.8 491.50h1.68v2.40h-1.68zM432.8 498.00h1.68v2.40h-1.68zM434.5 491.50h1.68v2.40h-1.68zM434.5 498.00h1.68v2.40h-1.68zM436.2 491.50h1.68v2.40h-1.68zM437.8 491.50h1.68v2.40h-1.68zM437.8 498.00h1.68v2.40h-1.68zM444.6 498.00h1.68v2.40h-1.68zM446.3 491.50h1.68v2.40h-1.68zM447.9 498.00h1.68v2.40h-1.68zM449.6 491.50h1.68v2.40h-1.68zM449.6 498.00h1.68v2.40h-1.68zM451.3 491.50h1.68v2.40h-1.68zM453.0 491.50h1.68v2.40h-1.68zM454.7 498.00h1.68v2.40h-1.68zM463.1 498.00h1.68v2.40h-1.68zM464.8 491.50h1.68v2.40h-1.68zM466.5 491.50h1.68v2.40h-1.68zM468.1 491.50h1.68v2.40h-1.68zM468.1 498.00h1.68v2.40h-1.68zM471.5 498.00h1.68v2.40h-1.68zM476.5 491.50h0.65v2.40h-0.65z" fill="#ee0a80"/><path d="M224.2 499.40h1.5v2.7h-1.5z" fill="#b00860"/>
<path d="M402.0 489.7h1.75v13.2h-1.75zM403.7 489.1h1.75v13.3h-1.75zM405.4 489.7h1.75v13.3h-1.75zM407.0 486.9h1.75v18.1h-1.75zM408.7 489.0h1.75v16.2h-1.75zM410.4 486.5h1.75v16.4h-1.75zM412.1 488.2h1.75v17.3h-1.75zM413.8 485.7h1.75v17.9h-1.75zM415.5 487.3h1.75v18.5h-1.75zM417.1 485.3h1.75v18.3h-1.75zM418.8 487.7h1.75v16.8h-1.75zM420.5 485.6h1.75v19.7h-1.75zM422.2 488.1h1.75v17.9h-1.75zM423.9 488.1h1.75v17.4h-1.75zM425.6 487.0h1.75v18.0h-1.75zM427.2 485.4h1.75v19.7h-1.75zM428.9 488.9h1.75v16.5h-1.75zM430.6 486.4h1.75v17.6h-1.75zM432.3 487.6h1.75v16.5h-1.75zM434.0 487.8h1.75v17.2h-1.75zM435.7 487.2h1.75v17.5h-1.75zM437.3 486.2h1.75v18.9h-1.75zM439.0 487.1h1.75v17.3h-1.75zM440.7 487.2h1.75v17.6h-1.75zM442.4 486.0h1.75v17.6h-1.75zM444.1 487.9h1.75v15.1h-1.75zM445.7 488.8h1.75v14.3h-1.75zM447.4 490.2h1.75v11.6h-1.75zM449.1 490.7h1.75v10.4h-1.75zM450.8 491.9h1.75v8.0h-1.75z" fill="#e3087a"/><path d="M405.4 503.0h1.7v2.1h-1.7zM407.0 505.0h1.7v1.7h-1.7zM408.7 505.1h1.7v2.5h-1.7zM417.1 482.6h1.7v2.7h-1.7zM417.1 503.7h1.7v3.4h-1.7zM420.5 483.4h1.7v2.2h-1.7zM422.2 506.1h1.7v2.2h-1.7zM423.9 485.2h1.7v2.9h-1.7zM423.9 505.5h1.7v3.2h-1.7zM425.6 485.4h1.7v1.6h-1.7zM427.2 505.0h1.7v1.7h-1.7zM428.9 486.8h1.7v2.0h-1.7zM430.6 504.0h1.7v2.6h-1.7zM432.3 485.6h1.7v2.1h-1.7zM432.3 504.2h1.7v1.5h-1.7zM434.0 486.1h1.7v1.7h-1.7zM442.4 483.8h1.7v2.1h-1.7zM442.4 503.5h1.7v3.1h-1.7zM444.1 484.7h1.7v3.2h-1.7z" fill="#b00860"/>
<rect x="477.2" y="633.00" width="262.3" height="6.70" fill="#a00658"/><rect x="477.2" y="633.00" width="262.3" height="5.00" fill="#ee0a80"/><path d="M485.6 637.90h1.68v1.80h-1.68zM489.0 637.90h1.68v1.80h-1.68zM492.3 637.90h1.68v1.80h-1.68zM497.4 637.90h1.68v1.80h-1.68zM500.8 637.90h1.68v1.80h-1.68zM502.4 637.90h1.68v1.80h-1.68zM510.9 637.90h1.68v1.80h-1.68zM512.5 637.90h1.68v1.80h-1.68zM514.2 637.90h1.68v1.80h-1.68zM517.6 637.90h1.68v1.80h-1.68zM531.0 637.90h1.68v1.80h-1.68zM534.4 637.90h1.68v1.80h-1.68zM536.1 637.90h1.68v1.80h-1.68zM544.5 637.90h1.68v1.80h-1.68zM546.2 637.90h1.68v1.80h-1.68zM547.9 637.90h1.68v1.80h-1.68zM549.5 637.90h1.68v1.80h-1.68zM552.9 637.90h1.68v1.80h-1.68zM558.0 637.90h1.68v1.80h-1.68zM559.6 637.90h1.68v1.80h-1.68zM561.3 637.90h1.68v1.80h-1.68zM568.1 637.90h1.68v1.80h-1.68zM569.7 637.90h1.68v1.80h-1.68zM571.4 637.90h1.68v1.80h-1.68zM573.1 637.90h1.68v1.80h-1.68zM578.2 637.90h1.68v1.80h-1.68zM579.8 637.90h1.68v1.80h-1.68zM581.5 637.90h1.68v1.80h-1.68zM583.2 637.90h1.68v1.80h-1.68zM586.6 637.90h1.68v1.80h-1.68zM593.3 637.90h1.68v1.80h-1.68zM595.0 637.90h1.68v1.80h-1.68zM598.3 637.90h1.68v1.80h-1.68zM600.0 637.90h1.68v1.80h-1.68zM603.4 637.90h1.68v1.80h-1.68zM608.4 637.90h1.68v1.80h-1.68zM611.8 637.90h1.68v1.80h-1.68zM615.2 637.90h1.68v1.80h-1.68zM623.6 637.90h1.68v1.80h-1.68zM630.3 637.90h1.68v1.80h-1.68zM632.0 637.90h1.68v1.80h-1.68zM635.4 637.90h1.68v1.80h-1.68zM642.1 637.90h1.68v1.80h-1.68zM643.8 637.90h1.68v1.80h-1.68zM652.2 637.90h1.68v1.80h-1.68zM653.9 637.90h1.68v1.80h-1.68zM660.6 637.90h1.68v1.80h-1.68zM662.3 637.90h1.68v1.80h-1.68zM664.0 637.90h1.68v1.80h-1.68zM669.0 637.90h1.68v1.80h-1.68zM670.7 637.90h1.68v1.80h-1.68zM675.7 637.90h1.68v1.80h-1.68zM679.1 637.90h1.68v1.80h-1.68zM684.1 637.90h1.68v1.80h-1.68zM692.6 637.90h1.68v1.80h-1.68zM695.9 637.90h1.68v1.80h-1.68zM697.6 637.90h1.68v1.80h-1.68zM701.0 637.90h1.68v1.80h-1.68zM706.0 637.90h1.68v1.80h-1.68zM709.4 637.90h1.68v1.80h-1.68zM716.1 637.90h1.68v1.80h-1.68zM719.5 637.90h1.68v1.80h-1.68zM722.8 637.90h1.68v1.80h-1.68zM724.5 637.90h1.68v1.80h-1.68zM726.2 637.90h1.68v1.80h-1.68zM727.9 637.90h1.68v1.80h-1.68zM731.3 637.90h1.68v1.80h-1.68zM732.9 637.90h1.68v1.80h-1.68zM738.0 637.90h1.51v1.80h-1.51z" fill="#ee0a80"/><path d="M480.6 631.06h1.5v2.9h-1.5zM547.9 628.55h1.5v5.4h-1.5zM571.4 628.87h1.5v5.1h-1.5zM593.3 638.70h1.5v5.2h-1.5zM642.1 631.49h1.5v2.5h-1.5zM677.4 630.81h1.5v3.2h-1.5zM726.2 628.84h1.5v5.2h-1.5z" fill="#b00860"/>
<rect x="739.5" y="491.50" width="365.5" height="8.90" fill="#8c0650"/><rect x="739.5" y="493.80" width="365.5" height="4.30" fill="#ee0a80"/><path d="M739.5 491.50h1.68v2.40h-1.68zM739.5 498.00h1.68v2.40h-1.68zM741.2 491.50h1.68v2.40h-1.68zM742.9 491.50h1.68v2.40h-1.68zM742.9 498.00h1.68v2.40h-1.68zM744.5 491.50h1.68v2.40h-1.68zM744.5 498.00h1.68v2.40h-1.68zM746.2 491.50h1.68v2.40h-1.68zM749.6 491.50h1.68v2.40h-1.68zM751.3 498.00h1.68v2.40h-1.68zM753.0 491.50h1.68v2.40h-1.68zM754.6 498.00h1.68v2.40h-1.68zM756.3 491.50h1.68v2.40h-1.68zM756.3 498.00h1.68v2.40h-1.68zM758.0 498.00h1.68v2.40h-1.68zM761.4 491.50h1.68v2.40h-1.68zM761.4 498.00h1.68v2.40h-1.68zM764.7 491.50h1.68v2.40h-1.68zM764.7 498.00h1.68v2.40h-1.68zM771.5 498.00h1.68v2.40h-1.68zM773.2 491.50h1.68v2.40h-1.68zM773.2 498.00h1.68v2.40h-1.68zM774.8 498.00h1.68v2.40h-1.68zM778.2 498.00h1.68v2.40h-1.68zM779.9 491.50h1.68v2.40h-1.68zM779.9 498.00h1.68v2.40h-1.68zM783.2 491.50h1.68v2.40h-1.68zM783.2 498.00h1.68v2.40h-1.68zM786.6 491.50h1.68v2.40h-1.68zM788.3 498.00h1.68v2.40h-1.68zM790.0 491.50h1.68v2.40h-1.68zM790.0 498.00h1.68v2.40h-1.68zM791.7 491.50h1.68v2.40h-1.68zM795.0 491.50h1.68v2.40h-1.68zM795.0 498.00h1.68v2.40h-1.68zM798.4 491.50h1.68v2.40h-1.68zM800.1 491.50h1.68v2.40h-1.68zM800.1 498.00h1.68v2.40h-1.68zM801.8 498.00h1.68v2.40h-1.68zM805.1 498.00h1.68v2.40h-1.68zM806.8 491.50h1.68v2.40h-1.68zM806.8 498.00h1.68v2.40h-1.68zM808.5 491.50h1.68v2.40h-1.68zM813.5 498.00h1.68v2.40h-1.68zM815.2 491.50h1.68v2.40h-1.68zM818.6 498.00h1.68v2.40h-1.68zM820.3 491.50h1.68v2.40h-1.68zM820.3 498.00h1.68v2.40h-1.68zM821.9 491.50h1.68v2.40h-1.68zM821.9 498.00h1.68v2.40h-1.68zM823.6 498.00h1.68v2.40h-1.68zM825.3 491.50h1.68v2.40h-1.68zM827.0 491.50h1.68v2.40h-1.68zM828.7 498.00h1.68v2.40h-1.68zM832.0 491.50h1.68v2.40h-1.68zM833.7 491.50h1.68v2.40h-1.68zM833.7 498.00h1.68v2.40h-1.68zM835.4 491.50h1.68v2.40h-1.68zM835.4 498.00h1.68v2.40h-1.68zM838.8 491.50h1.68v2.40h-1.68zM838.8 498.00h1.68v2.40h-1.68zM840.5 498.00h1.68v2.40h-1.68zM843.8 491.50h1.68v2.40h-1.68zM843.8 498.00h1.68v2.40h-1.68zM847.2 491.50h1.68v2.40h-1.68zM847.2 498.00h1.68v2.40h-1.68zM850.5 491.50h1.68v2.40h-1.68zM852.2 491.50h1.68v2.40h-1.68zM853.9 498.00h1.68v2.40h-1.68zM855.6 491.50h1.68v2.40h-1.68zM855.6 498.00h1.68v2.40h-1.68zM857.3 491.50h1.68v2.40h-1.68zM857.3 498.00h1.68v2.40h-1.68zM859.0 491.50h1.68v2.40h-1.68zM860.6 491.50h1.68v2.40h-1.68zM860.6 498.00h1.68v2.40h-1.68zM862.3 491.50h1.68v2.40h-1.68zM862.3 498.00h1.68v2.40h-1.68zM864.0 498.00h1.68v2.40h-1.68zM865.7 491.50h1.68v2.40h-1.68zM865.7 498.00h1.68v2.40h-1.68zM867.4 491.50h1.68v2.40h-1.68zM869.1 491.50h1.68v2.40h-1.68zM869.1 498.00h1.68v2.40h-1.68zM872.4 491.50h1.68v2.40h-1.68zM872.4 498.00h1.68v2.40h-1.68zM874.1 498.00h1.68v2.40h-1.68zM877.5 498.00h1.68v2.40h-1.68zM879.1 491.50h1.68v2.40h-1.68zM880.8 491.50h1.68v2.40h-1.68zM880.8 498.00h1.68v2.40h-1.68zM882.5 498.00h1.68v2.40h-1.68zM885.9 491.50h1.68v2.40h-1.68zM885.9 498.00h1.68v2.40h-1.68zM889.2 491.50h1.68v2.40h-1.68zM889.2 498.00h1.68v2.40h-1.68zM890.9 491.50h1.68v2.40h-1.68zM890.9 498.00h1.68v2.40h-1.68zM892.6 491.50h1.68v2.40h-1.68zM892.6 498.00h1.68v2.40h-1.68zM894.3 491.50h1.68v2.40h-1.68zM896.0 491.50h1.68v2.40h-1.68zM897.7 491.50h1.68v2.40h-1.68zM897.7 498.00h1.68v2.40h-1.68zM899.3 491.50h1.68v2.40h-1.68zM899.3 498.00h1.68v2.40h-1.68zM901.0 491.50h1.68v2.40h-1.68zM901.0 498.00h1.68v2.40h-1.68zM902.7 491.50h1.68v2.40h-1.68zM904.4 491.50h1.68v2.40h-1.68zM906.1 491.50h1.68v2.40h-1.68zM907.8 491.50h1.68v2.40h-1.68zM907.8 498.00h1.68v2.40h-1.68zM912.8 491.50h1.68v2.40h-1.68zM916.2 491.50h1.68v2.40h-1.68zM919.5 491.50h1.68v2.40h-1.68zM919.5 498.00h1.68v2.40h-1.68zM921.2 491.50h1.68v2.40h-1.68zM924.6 491.50h1.68v2.40h-1.68zM927.9 491.50h1.68v2.40h-1.68zM929.6 491.50h1.68v2.40h-1.68zM931.3 491.50h1.68v2.40h-1.68zM933.0 491.50h1.68v2.40h-1.68zM934.7 491.50h1.68v2.40h-1.68zM934.7 498.00h1.68v2.40h-1.68zM936.4 498.00h1.68v2.40h-1.68zM938.0 491.50h1.68v2.40h-1.68zM943.1 491.50h1.68v2.40h-1.68zM944.8 498.00h1.68v2.40h-1.68zM946.4 491.50h1.68v2.40h-1.68zM946.4 498.00h1.68v2.40h-1.68zM948.1 491.50h1.68v2.40h-1.68zM949.8 491.50h1.68v2.40h-1.68zM949.8 498.00h1.68v2.40h-1.68zM953.2 491.50h1.68v2.40h-1.68zM959.9 498.00h1.68v2.40h-1.68zM961.6 491.50h1.68v2.40h-1.68zM961.6 498.00h1.68v2.40h-1.68zM966.6 491.50h1.68v2.40h-1.68zM968.3 498.00h1.68v2.40h-1.68zM971.7 498.00h1.68v2.40h-1.68zM975.1 498.00h1.68v2.40h-1.68zM978.4 491.50h1.68v2.40h-1.68zM980.1 498.00h1.68v2.40h-1.68zM981.8 491.50h1.68v2.40h-1.68zM981.8 498.00h1.68v2.40h-1.68zM985.1 491.50h1.68v2.40h-1.68zM988.5 491.50h1.68v2.40h-1.68zM988.5 498.00h1.68v2.40h-1.68zM990.2 491.50h1.68v2.40h-1.68zM995.2 491.50h1.68v2.40h-1.68zM995.2 498.00h1.68v2.40h-1.68zM998.6 491.50h1.68v2.40h-1.68zM998.6 498.00h1.68v2.40h-1.68zM1003.7 491.50h1.68v2.40h-1.68zM1005.3 491.50h1.68v2.40h-1.68zM1005.3 498.00h1.68v2.40h-1.68zM1007.0 498.00h1.68v2.40h-1.68zM1008.7 498.00h1.68v2.40h-1.68zM1010.4 491.50h1.68v2.40h-1.68zM1010.4 498.00h1.68v2.40h-1.68zM1012.1 491.50h1.68v2.40h-1.68zM1013.7 498.00h1.68v2.40h-1.68zM1015.4 491.50h1.68v2.40h-1.68zM1015.4 498.00h1.68v2.40h-1.68zM1017.1 498.00h1.68v2.40h-1.68zM1018.8 498.00h1.68v2.40h-1.68zM1020.5 491.50h1.68v2.40h-1.68zM1020.5 498.00h1.68v2.40h-1.68zM1025.5 491.50h1.68v2.40h-1.68zM1025.5 498.00h1.68v2.40h-1.68zM1028.9 491.50h1.68v2.40h-1.68zM1030.6 498.00h1.68v2.40h-1.68zM1032.3 498.00h1.68v2.40h-1.68zM1033.9 491.50h1.68v2.40h-1.68zM1033.9 498.00h1.68v2.40h-1.68zM1035.6 491.50h1.68v2.40h-1.68zM1035.6 498.00h1.68v2.40h-1.68zM1037.3 498.00h1.68v2.40h-1.68zM1040.7 498.00h1.68v2.40h-1.68zM1042.3 491.50h1.68v2.40h-1.68zM1044.0 491.50h1.68v2.40h-1.68zM1049.1 491.50h1.68v2.40h-1.68zM1049.1 498.00h1.68v2.40h-1.68zM1050.8 491.50h1.68v2.40h-1.68zM1052.4 498.00h1.68v2.40h-1.68zM1054.1 498.00h1.68v2.40h-1.68zM1055.8 498.00h1.68v2.40h-1.68zM1057.5 491.50h1.68v2.40h-1.68zM1057.5 498.00h1.68v2.40h-1.68zM1059.2 491.50h1.68v2.40h-1.68zM1060.9 491.50h1.68v2.40h-1.68zM1060.9 498.00h1.68v2.40h-1.68zM1064.2 491.50h1.68v2.40h-1.68zM1064.2 498.00h1.68v2.40h-1.68zM1067.6 491.50h1.68v2.40h-1.68zM1067.6 498.00h1.68v2.40h-1.68zM1069.3 491.50h1.68v2.40h-1.68zM1069.3 498.00h1.68v2.40h-1.68zM1071.0 491.50h1.68v2.40h-1.68zM1071.0 498.00h1.68v2.40h-1.68zM1072.6 491.50h1.68v2.40h-1.68zM1074.3 491.50h1.68v2.40h-1.68zM1074.3 498.00h1.68v2.40h-1.68zM1076.0 498.00h1.68v2.40h-1.68zM1077.7 491.50h1.68v2.40h-1.68zM1079.4 498.00h1.68v2.40h-1.68zM1082.7 498.00h1.68v2.40h-1.68zM1084.4 498.00h1.68v2.40h-1.68zM1086.1 491.50h1.68v2.40h-1.68zM1087.8 491.50h1.68v2.40h-1.68zM1087.8 498.00h1.68v2.40h-1.68zM1089.5 491.50h1.68v2.40h-1.68zM1091.1 491.50h1.68v2.40h-1.68zM1092.8 491.50h1.68v2.40h-1.68zM1094.5 498.00h1.68v2.40h-1.68zM1096.2 498.00h1.68v2.40h-1.68zM1099.6 498.00h1.68v2.40h-1.68zM1101.2 491.50h1.68v2.40h-1.68zM1101.2 498.00h1.68v2.40h-1.68zM1102.9 491.50h1.68v2.40h-1.68zM1104.6 491.50h0.40v2.40h-0.40zM1104.6 498.00h0.40v2.40h-0.40z" fill="#ee0a80"/><path d="M837.1 499.40h1.5v5.5h-1.5zM924.6 499.40h1.5v3.2h-1.5zM980.1 488.81h1.5v3.7h-1.5zM1045.7 487.62h1.5v4.9h-1.5z" fill="#b00860"/>
<path d="M740.5 488.6h1.75v14.7h-1.75zM742.2 489.6h1.75v13.8h-1.75zM743.9 489.8h1.75v12.6h-1.75zM745.5 488.1h1.75v14.5h-1.75zM747.2 487.4h1.75v17.2h-1.75zM748.9 488.5h1.75v15.3h-1.75zM750.6 486.5h1.75v19.3h-1.75zM752.3 485.9h1.75v20.0h-1.75zM754.0 488.7h1.75v16.9h-1.75zM755.6 487.9h1.75v16.6h-1.75zM757.3 486.2h1.75v19.9h-1.75zM759.0 488.7h1.75v16.6h-1.75zM760.7 488.4h1.75v16.5h-1.75zM762.4 486.0h1.75v19.6h-1.75zM764.1 487.3h1.75v15.7h-1.75zM765.7 487.4h1.75v15.9h-1.75zM767.4 488.6h1.75v15.8h-1.75zM769.1 485.8h1.75v19.1h-1.75zM770.8 486.8h1.75v18.4h-1.75zM772.5 487.4h1.75v18.6h-1.75zM774.2 488.0h1.75v15.1h-1.75zM775.8 485.6h1.75v18.1h-1.75zM777.5 485.8h1.75v17.7h-1.75zM779.2 485.6h1.75v20.0h-1.75zM780.9 488.0h1.75v18.0h-1.75zM782.6 488.0h1.75v17.9h-1.75zM784.2 488.9h1.75v13.5h-1.75zM785.9 490.0h1.75v13.1h-1.75zM787.6 490.3h1.75v11.9h-1.75zM789.3 490.7h1.75v10.2h-1.75zM791.0 491.9h1.75v8.0h-1.75z" fill="#e3087a"/><path d="M743.9 486.7h1.7v3.1h-1.7zM745.5 502.6h1.7v1.8h-1.7zM748.9 486.1h1.7v2.5h-1.7zM748.9 503.8h1.7v3.2h-1.7zM752.3 505.9h1.7v2.2h-1.7zM757.3 506.1h1.7v2.7h-1.7zM760.7 486.0h1.7v2.4h-1.7zM760.7 504.9h1.7v2.3h-1.7zM765.7 503.4h1.7v1.7h-1.7zM767.4 485.5h1.7v3.2h-1.7zM769.1 483.7h1.7v2.1h-1.7zM770.8 505.2h1.7v1.9h-1.7zM775.8 484.0h1.7v1.5h-1.7zM775.8 503.6h1.7v3.1h-1.7zM777.5 483.1h1.7v2.7h-1.7zM777.5 503.4h1.7v2.7h-1.7zM779.2 482.9h1.7v2.7h-1.7zM779.2 505.6h1.7v3.0h-1.7zM782.6 505.9h1.7v2.8h-1.7zM784.2 486.1h1.7v2.7h-1.7zM785.9 487.0h1.7v3.0h-1.7z" fill="#b00860"/>
<path d="M399.6 74V742" stroke="#ff8a00" stroke-width="2.6" stroke-dasharray="8.7 3.05" stroke-dashoffset="0.2" fill="none"/>
<path d="M477.2 74V742" stroke="#ff8a00" stroke-width="2.7" stroke-dasharray="16.8 3.3" stroke-dashoffset="-0.3" fill="none"/>
<path d="M29 742.3H1105" stroke="#f5a030" stroke-width="2" stroke-dasharray="56 4 50 4 20 4 58 4 14 4" fill="none"/>
<rect x="0" y="72" width="1107.2" height="2.2" fill="#e9e9e9"/>
<rect x="0" y="743.2" width="1107.2" height="2.2" fill="#e9e9e9"/>
<rect x="26.9" y="72" width="2.1" height="673.4" fill="#e9e9e9"/>
<rect x="1105.1" y="72" width="2.1" height="673.4" fill="#e9e9e9"/>
<path d="M29 74.2H38.8L29 84.5Z" fill="#ff8a00"/>
<path d="M559 73.5L567.8 82.6L576.6 73.5" fill="none" stroke="#ff8a00" stroke-width="2.6"/>
<path d="M13.2 312.2H24.6M18.9 312.2V324.4" stroke="#36e800" stroke-width="1.8" fill="none"/>
<path d="M18.3 329.5L27 337.3L18.3 345.2Z" fill="#36e800"/>
<text transform="translate(-0.26 393.20) scale(0.7560 1)" font-family='"Liberation Sans", sans-serif' font-size="22.67" font-weight="400" fill="#36e800">2</text>
<path d="M18.3 378.2L27 385.8L18.3 393.3Z" fill="#36e800"/>
<path d="M18.5 386.2H12.5V398.8M5.3 398.8H20.4M7.6 402.8H18.2M10.3 406.4H15.3" stroke="#36e800" stroke-width="1.7" fill="none"/>
<text transform="translate(0.46 638.60) scale(0.7511 1)" font-family='"Liberation Sans", sans-serif' font-size="22.67" font-weight="400" fill="#ee0a80">4</text>
<path d="M18.3 623.8L27 631.4L18.3 638.9Z" fill="#ee0a80"/>
<path d="M18.5 631.8H12.5V644.4M5.3 644.4H20.4M7.6 648.4H18.2M10.3 652.0H15.3" stroke="#ee0a80" stroke-width="1.7" fill="none"/>
<rect x="1111.4" y="73.3" width="232.6" height="670.8" rx="9" ry="9" fill="#181818" stroke="#747474" stroke-width="2.4"/>
<path d="M1123.9 105.8L1129.9 105.1L1133.1 101.2L1135.2 93.4L1138.4 88.8L1141.6 93.4L1143.3 101.2L1146.2 104.8L1149.0 105.5L1152.6 103.3L1155.0 96.3L1156.8 87.8L1161.1 82.1L1165.3 87.8L1167.4 96.3L1169.6 103.3L1172.1 105.6L1174.9 102.6L1176.7 96.3L1178.8 93.8L1181.3 97.7L1183.0 103.0L1185.2 105.5L1178.8 106.5L1176.3 110.4L1174.2 118.2L1170.3 122.5L1167.1 117.5L1164.6 109.0L1161.8 106.2L1159.6 106.2L1156.5 109.0L1154.3 117.5L1151.9 126.0L1147.6 129.6L1143.7 126.0L1141.6 117.5L1139.5 109.0L1136.6 106.2L1134.1 109.0L1132.4 114.7L1129.9 117.5L1127.4 113.3L1125.6 108.3Z" fill="#e8002a" stroke="#e8002a" stroke-width="0.8" stroke-linejoin="round"/>
<text transform="translate(1192.76 105.30) scale(0.9384 1)" font-family='"Liberation Sans", sans-serif' font-size="28.49" font-weight="700" fill="#ffffff">KEYSIGHT</text>
<text transform="translate(1195.47 124.20) scale(1.1023 1)" font-family='"Liberation Sans", sans-serif' font-size="15.12" font-weight="400" fill="#f4f4f4" stroke="#f4f4f4" stroke-width="0.35">TECHNOLOGIES</text>
<rect x="1112.6" y="139.3" width="230.2" height="34.3" fill="#54585b"/><rect x="1112.6" y="139.3" width="230.2" height="2.4" fill="#787c7e"/><rect x="1112.6" y="171.0" width="230.2" height="2.6" fill="#787c7e"/><path d="M1118.8 150.7h2.4v2.4h-2.4zM1118.8 155.8h2.4v2.4h-2.4zM1118.8 161.0h2.4v2.4h-2.4zM1123.8 150.7h2.4v2.4h-2.4zM1123.8 155.8h2.4v2.4h-2.4zM1123.8 161.0h2.4v2.4h-2.4zM1327.3 150.7h2.4v2.4h-2.4zM1327.3 155.8h2.4v2.4h-2.4zM1327.3 161.0h2.4v2.4h-2.4zM1332.3 150.7h2.4v2.4h-2.4zM1332.3 155.8h2.4v2.4h-2.4zM1332.3 161.0h2.4v2.4h-2.4z" fill="#c4c6c7"/><text transform="translate(1172.30 164.30) scale(0.7908 1)" font-family='"Liberation Sans", sans-serif' font-size="28.92" font-weight="400" fill="#e4e4e4">Acquisition</text>
<text transform="translate(1188.71 198.30) scale(0.8144 1)" font-family='"Liberation Sans", sans-serif' font-size="29.07" font-weight="400" fill="#d2d2d2">Normal</text>
<text transform="translate(1173.45 231.90) scale(0.7676 1)" font-family='"Liberation Sans", sans-serif' font-size="29.07" font-weight="400" fill="#d2d2d2">4.00GSa/s</text>
<rect x="1112.6" y="273.3" width="230.2" height="34.9" fill="#54585b"/><rect x="1112.6" y="273.3" width="230.2" height="2.4" fill="#787c7e"/><rect x="1112.6" y="305.6" width="230.2" height="2.6" fill="#787c7e"/><path d="M1118.8 285.0h2.4v2.4h-2.4zM1118.8 290.2h2.4v2.4h-2.4zM1118.8 295.4h2.4v2.4h-2.4zM1123.8 285.0h2.4v2.4h-2.4zM1123.8 290.2h2.4v2.4h-2.4zM1123.8 295.4h2.4v2.4h-2.4zM1327.3 285.0h2.4v2.4h-2.4zM1327.3 290.2h2.4v2.4h-2.4zM1327.3 295.4h2.4v2.4h-2.4zM1332.3 285.0h2.4v2.4h-2.4zM1332.3 290.2h2.4v2.4h-2.4zM1332.3 295.4h2.4v2.4h-2.4z" fill="#c4c6c7"/><text transform="translate(1182.36 299.40) scale(0.7199 1)" font-family='"Liberation Sans", sans-serif' font-size="28.92" font-weight="400" fill="#e4e4e4">Channels</text>
<text transform="translate(1116.57 332.90) scale(0.6594 1)" font-family='"Liberation Sans", sans-serif' font-size="29.07" font-weight="400" fill="#e6e600">DC</text>
<text transform="translate(1271.17 332.90) scale(0.7940 1)" font-family='"Liberation Sans", sans-serif' font-size="29.07" font-weight="400" fill="#e6e600">1.00:1</text>
<text transform="translate(1116.57 366.55) scale(0.6594 1)" font-family='"Liberation Sans", sans-serif' font-size="29.07" font-weight="400" fill="#36e800">DC</text>
<text transform="translate(1271.89 366.55) scale(0.7850 1)" font-family='"Liberation Sans", sans-serif' font-size="29.07" font-weight="400" fill="#36e800">10.0:1</text>
<text transform="translate(1116.57 400.20) scale(0.6594 1)" font-family='"Liberation Sans", sans-serif' font-size="29.07" font-weight="400" fill="#4a6be0">DC</text>
<text transform="translate(1271.89 400.20) scale(0.7850 1)" font-family='"Liberation Sans", sans-serif' font-size="29.07" font-weight="400" fill="#4a6be0">10.0:1</text>
<text transform="translate(1116.57 433.85) scale(0.6594 1)" font-family='"Liberation Sans", sans-serif' font-size="29.07" font-weight="400" fill="#ee0a80">DC</text>
<text transform="translate(1271.89 433.85) scale(0.7850 1)" font-family='"Liberation Sans", sans-serif' font-size="29.07" font-weight="400" fill="#ee0a80">10.0:1</text>
<rect x="1112.6" y="441.7" width="230.2" height="34.8" fill="#54585b"/><rect x="1112.6" y="441.7" width="230.2" height="2.4" fill="#787c7e"/><rect x="1112.6" y="473.9" width="230.2" height="2.6" fill="#787c7e"/><path d="M1118.8 453.3h2.4v2.4h-2.4zM1118.8 458.5h2.4v2.4h-2.4zM1118.8 463.7h2.4v2.4h-2.4zM1123.8 453.3h2.4v2.4h-2.4zM1123.8 458.5h2.4v2.4h-2.4zM1123.8 463.7h2.4v2.4h-2.4zM1327.3 453.3h2.4v2.4h-2.4zM1327.3 458.5h2.4v2.4h-2.4zM1327.3 463.7h2.4v2.4h-2.4zM1332.3 453.3h2.4v2.4h-2.4zM1332.3 458.5h2.4v2.4h-2.4zM1332.3 463.7h2.4v2.4h-2.4z" fill="#c4c6c7"/><text transform="translate(1187.87 467.70) scale(0.7836 1)" font-family='"Liberation Sans", sans-serif' font-size="28.92" font-weight="400" fill="#e4e4e4">Cursors</text>
<text transform="translate(1116.70 501.40) scale(0.7988 1)" font-family='"Liberation Sans", sans-serif' font-size="29.07" font-weight="400" fill="#d2d2d2">ΔX:</text>
<text transform="translate(1194.99 534.70) scale(0.8352 1)" font-family='"Liberation Sans", sans-serif' font-size="29.07" font-weight="400" fill="#d2d2d2">+1.440000us</text>
<rect x="1117.4" y="541.2" width="220.4" height="2.4" fill="#8a8a8a"/>
<text transform="translate(1118.17 568.70) scale(0.8389 1)" font-family='"Liberation Sans", sans-serif' font-size="29.07" font-weight="400" fill="#d2d2d2">1/ΔX:</text>
<text transform="translate(1210.33 602.00) scale(0.8082 1)" font-family='"Liberation Sans", sans-serif' font-size="29.07" font-weight="400" fill="#d2d2d2">+694.44kHz</text>
<rect x="1117.4" y="608.8" width="220.4" height="2.4" fill="#8a8a8a"/>
<text transform="translate(1116.73 635.60) scale(0.7640 1)" font-family='"Liberation Sans", sans-serif' font-size="29.07" font-weight="400" fill="#d2d2d2">ΔY(</text>
<text transform="translate(1154.31 635.60) scale(0.8165 1)" font-family='"Liberation Sans", sans-serif' font-size="29.07" font-weight="400" fill="#36e800">2</text>
<text transform="translate(1168.10 635.60) scale(0.7080 1)" font-family='"Liberation Sans", sans-serif' font-size="29.07" font-weight="400" fill="#d2d2d2">):</text>
<text transform="translate(1216.78 669.30) scale(0.8382 1)" font-family='"Liberation Sans", sans-serif' font-size="29.07" font-weight="400" fill="#d2d2d2">+8.00000V</text>
<rect x="1117.4" y="676.1" width="220.4" height="2.4" fill="#8a8a8a"/>
<text transform="translate(5.50 770.40) scale(0.7017 1)" font-family='"Liberation Sans", sans-serif' font-size="28.63" font-weight="400" fill="#dcdcdc">Save</text>
<text transform="translate(59.32 770.40) scale(0.8955 1)" font-family='"Liberation Sans", sans-serif' font-size="28.63" font-weight="400" fill="#dcdcdc">to</text>
<text transform="translate(87.67 770.40) scale(0.7675 1)" font-family='"Liberation Sans", sans-serif' font-size="28.63" font-weight="400" fill="#dcdcdc">file</text>
<text transform="translate(123.33 770.40) scale(0.9577 1)" font-family='"Liberation Sans", sans-serif' font-size="28.63" font-weight="400" fill="#dcdcdc">=</text>
<rect x="146" y="748.2" width="314.2" height="29.7" rx="5" ry="5" fill="#1a1a1a" stroke="#606060" stroke-width="2.2"/>
<text transform="translate(150.30 771.00) scale(0.9025 1)" font-family='"Liberation Mono", monospace' font-size="27.77" font-weight="400" fill="#e0e0e0">setup_1</text>
<defs><linearGradient id="bg" x1="0" y1="0" x2="0" y2="1"><stop offset="0" stop-color="#53575a"/><stop offset="0.46" stop-color="#565a5d"/><stop offset="0.63" stop-color="#45494c"/><stop offset="1" stop-color="#25282a"/></linearGradient><linearGradient id="be" x1="0" y1="0" x2="0" y2="1"><stop offset="0" stop-color="#44484b"/><stop offset="0.5" stop-color="#3d4144"/><stop offset="1" stop-color="#2a2d2f"/></linearGradient></defs>
<rect x="11.9" y="780.6" width="211.2" height="64.2" rx="8" ry="8" fill="url(#be)"/><rect x="17.4" y="780.6" width="200.2" height="63" rx="6" ry="6" fill="url(#bg)"/>
<rect x="234.0" y="780.6" width="211.2" height="64.2" rx="8" ry="8" fill="url(#be)"/><rect x="239.5" y="780.6" width="200.2" height="63" rx="6" ry="6" fill="url(#bg)"/>
<rect x="456.1" y="780.6" width="211.2" height="64.2" rx="8" ry="8" fill="url(#be)"/><rect x="461.6" y="780.6" width="200.2" height="63" rx="6" ry="6" fill="url(#bg)"/>
<rect x="1122.4" y="780.6" width="211.2" height="64.2" rx="8" ry="8" fill="url(#be)"/><rect x="1127.9" y="780.6" width="200.2" height="63" rx="6" ry="6" fill="url(#bg)"/>
<text transform="translate(92.37 804.00) scale(0.7352 1)" font-family='"Liberation Sans", sans-serif' font-size="28.20" font-weight="400" fill="#dedede">Save</text>
<text transform="translate(308.86 804.00) scale(0.7700 1)" font-family='"Liberation Sans", sans-serif' font-size="28.20" font-weight="400" fill="#dedede">Recall</text>
<text transform="translate(492.41 804.00) scale(0.7923 1)" font-family='"Liberation Sans", sans-serif' font-size="28.20" font-weight="400" fill="#dedede">Default/Erase</text>
<path d="M106.6 819.3h20.6v6.6h14.3l-24.6 13.6l-24.6 -13.6h14.3z" fill="#e2e2e2"/>
<path d="M328.7 819.3h20.6v6.6h14.3l-24.6 13.6l-24.6 -13.6h14.3z" fill="#e2e2e2"/>
<path d="M550.8 819.3h20.6v6.6h14.3l-24.6 13.6l-24.6 -13.6h14.3z" fill="#e2e2e2"/>
<text transform="translate(1183.76 803.80) scale(0.7732 1)" font-family='"Liberation Sans", sans-serif' font-size="28.20" font-weight="400" fill="#dedede">Press</text>
<text transform="translate(1247.92 803.80) scale(0.9002 1)" font-family='"Liberation Sans", sans-serif' font-size="28.20" font-weight="400" fill="#dedede">to</text>
<text transform="translate(1203.17 836.10) scale(0.7368 1)" font-family='"Liberation Sans", sans-serif' font-size="28.20" font-weight="400" fill="#dedede">Save</text>
<path d="M399.6 279.70H1438.6" stroke="#ff0000" stroke-width="2.7" fill="none"/><path d="M1428.3 269.80L1438.8 279.70L1428.3 289.60" stroke="#ff0000" stroke-width="2.7" fill="none" stroke-linejoin="miter" stroke-linecap="round"/>
<path d="M816.9 353.70H1438.6" stroke="#ff0000" stroke-width="2.7" fill="none"/><path d="M1428.3 343.80L1438.8 353.70L1428.3 363.60" stroke="#ff0000" stroke-width="2.7" fill="none" stroke-linejoin="miter" stroke-linecap="round"/>
<path d="M477.2 519.50H1438.6" stroke="#00b0f0" stroke-width="2.7" fill="none"/><path d="M1428.3 509.60L1438.8 519.50L1428.3 529.40" stroke="#00b0f0" stroke-width="2.7" fill="none" stroke-linejoin="miter" stroke-linecap="round"/>
<path d="M739.5 606.90H1437.3" stroke="#00b0f0" stroke-width="2.7" fill="none"/><path d="M1427.0 597.00L1437.5 606.90L1427.0 616.80" stroke="#00b0f0" stroke-width="2.7" fill="none" stroke-linejoin="miter" stroke-linecap="round"/>
<text transform="translate(1454.27 289.30) scale(0.9343 1)" font-family='"Liberation Sans", sans-serif' font-size="30.09" font-weight="700" fill="#ff0000">Lead device: Sends data</text>
<text transform="translate(1454.26 364.00) scale(0.9404 1)" font-family='"Liberation Sans", sans-serif' font-size="30.09" font-weight="700" fill="#ff0000">Lead device: Receives data</text>
<text transform="translate(1453.94 508.40) scale(0.9557 1)" font-family='"Liberation Sans", sans-serif' font-size="29.94" font-weight="700" fill="#0070c0">Node device: Receives data</text>
<text transform="translate(1454.44 548.00) scale(0.9570 1)" font-family='"Liberation Sans", sans-serif' font-size="29.94" font-weight="700" fill="#0070c0">and begins moving data for TX</text>
<text transform="translate(1454.35 616.10) scale(0.9523 1)" font-family='"Liberation Sans", sans-serif' font-size="29.94" font-weight="700" fill="#0070c0">Node device: Sends data</text>
</svg>
</body></html>
